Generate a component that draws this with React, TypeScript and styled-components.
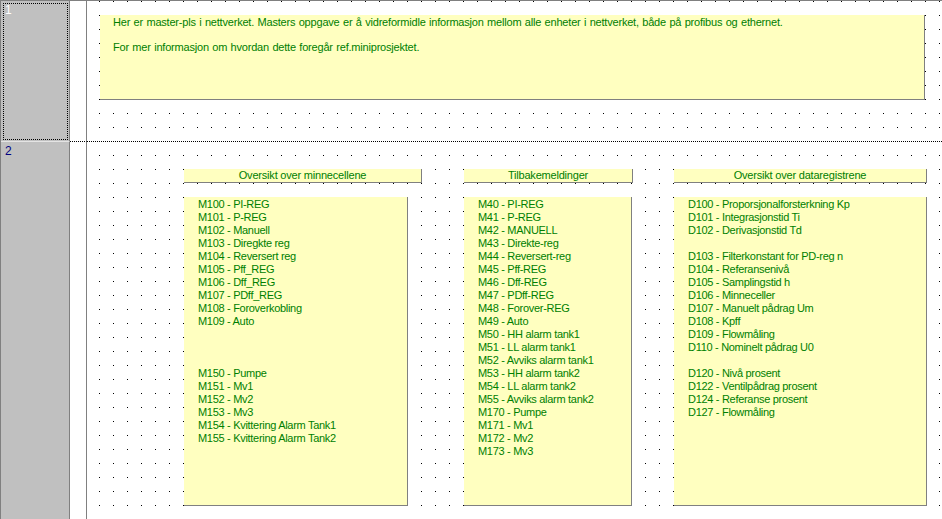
import styled, { createGlobalStyle } from "styled-components";

const GlobalStyle = createGlobalStyle`
    html, body {
        margin: 0;
        padding: 0;
        background: #ffffff;
        overflow: hidden;
    }
    body {
        font-family: "Liberation Sans", Arial, sans-serif;
    }
`;

const Editor = styled.div`
    height: 100vh;
    display: flex;
    flex-direction: column;
    box-sizing: border-box;
    border-top: 1px solid #808080;
    border-left: 1px solid #808080;
`;

const Network = styled.div<{ $height?: number }>`
    display: flex;
    ${(p) => (p.$height ? `height: ${p.$height}px; flex: none;` : "flex: 1;")}
`;

const NetworkLabel = styled.div<{ $active?: boolean }>`
    width: 69px;
    flex: none;
    box-sizing: border-box;
    background: #c0c0c0;
    border-right: 1px solid #808080;
    border-bottom: ${(p) => (p.$active ? "1px solid #e4e4e4" : "none")};
    outline: ${(p) => (p.$active ? "1px dotted #000" : "none")};
    outline-offset: -3px;
    padding: 2px 4px;
    font-size: 12px;
    line-height: 14px;
    color: ${(p) => (p.$active ? "#ffffff" : "#000080")};
`;

const Rail = styled.div<{ $sep?: boolean }>`
    width: 17px;
    flex: none;
    box-sizing: border-box;
    border-right: 1px solid #808080;
    border-bottom: ${(p) => (p.$sep ? "1px dotted #000" : "none")};
`;

const Canvas = styled.div<{ $dotY: number; $sep?: boolean }>`
    flex: 1;
    box-sizing: border-box;
    background-color: #ffffff;
    background-image: conic-gradient(from 270deg at 1px 1px, #000 90deg, transparent 0);
    background-size: 14px 14px;
    background-position: 12px ${(p) => p.$dotY}px;
    border-bottom: ${(p) => (p.$sep ? "1px dotted #000" : "none")};
    font-size: 11px;
    line-height: 13px;
    letter-spacing: -0.3px;
    color: #008000;
`;

const CommentArea = styled.div`
    padding: 14px 0 0 13px;
`;

const CommentBox = styled.div`
    width: 825px;
    height: 85px;
    box-sizing: border-box;
    background: #ffffc0;
    border-right: 1px solid #808080;
    border-bottom: 1px solid #808080;
    padding: 1px 13px;
    white-space: nowrap;
    letter-spacing: -0.2px;
    word-spacing: 0.6px;
`;

const Para = styled.div`
    & + & {
        margin-top: 12px;
    }
`;

const Columns = styled.div`
    display: grid;
    grid-template-columns: 280px 210px 253px;
    padding: 27px 0 0 97px;
`;

const Column = styled.div`
    display: flex;
    flex-direction: column;
    align-items: flex-start;
`;

const Header = styled.div<{ $w: number }>`
    width: ${(p) => p.$w}px;
    height: 14px;
    box-sizing: border-box;
    background: #ffffc0;
    border-right: 1px solid #808080;
    border-bottom: 1px solid #808080;
    text-align: center;
    white-space: nowrap;
    letter-spacing: -0.2px;
`;

const List = styled.div<{ $w: number }>`
    width: ${(p) => p.$w}px;
    height: 309px;
    margin-top: 14px;
    box-sizing: border-box;
    background: #ffffc0;
    border-right: 1px solid #808080;
    border-bottom: 1px solid #808080;
    padding: 1px 14px 0;
    white-space: nowrap;
`;

const Line = styled.div`
    height: 13px;
`;

const memoryCells = [
    "M100 - PI-REG",
    "M101 - P-REG",
    "M102 - Manuell",
    "M103 - Diregkte reg",
    "M104 - Reversert reg",
    "M105 - Pff_REG",
    "M106 - Dff_REG",
    "M107 - PDff_REG",
    "M108 - Foroverkobling",
    "M109 - Auto",
    "",
    "",
    "",
    "M150 - Pumpe",
    "M151 - Mv1",
    "M152 - Mv2",
    "M153 - Mv3",
    "M154 - Kvittering Alarm Tank1",
    "M155 - Kvittering Alarm Tank2",
];

const feedback = [
    "M40 - PI-REG",
    "M41 - P-REG",
    "M42 - MANUELL",
    "M43 - Direkte-reg",
    "M44 - Reversert-reg",
    "M45 - Pff-REG",
    "M46 - Dff-REG",
    "M47 - PDff-REG",
    "M48 - Forover-REG",
    "M49 - Auto",
    "M50 - HH alarm tank1",
    "M51 - LL alarm tank1",
    "M52 - Avviks alarm tank1",
    "M53 - HH alarm tank2",
    "M54 - LL alarm tank2",
    "M55 - Avviks alarm tank2",
    "M170 - Pumpe",
    "M171 - Mv1",
    "M172 - Mv2",
    "M173 - Mv3",
];

const dataRegisters = [
    "D100 - Proporsjonalforsterkning Kp",
    "D101 - Integrasjonstid Ti",
    "D102 - Derivasjonstid Td",
    "",
    "D103 - Filterkonstant for PD-reg n",
    "D104 - Referansenivå",
    "D105 - Samplingstid h",
    "D106 - Minneceller",
    "D107 - Manuelt pådrag Um",
    "D108 - Kpff",
    "D109 - Flowmåling",
    "D110 - Nominelt pådrag U0",
    "",
    "D120 - Nivå prosent",
    "D122 - Ventilpådrag prosent",
    "D124 - Referanse prosent",
    "D127 - Flowmåling",
];

const sections = [
    { title: "Oversikt over minnecellene", headerW: 238, listW: 224, lines: memoryCells },
    { title: "Tilbakemeldinger", headerW: 169, listW: 168, lines: feedback },
    { title: "Oversikt over dataregistrene", headerW: 253, listW: 253, lines: dataRegisters },
];

export default function App() {
    return (
        <>
            <GlobalStyle />
            <Editor>
                <Network $height={141}>
                    <NetworkLabel $active>1</NetworkLabel>
                    <Rail $sep />
                    <Canvas $dotY={14} $sep>
                        <CommentArea>
                            <CommentBox>
                                <Para>
                                    Her er master-pls i nettverket. Masters oppgave er å vidreformidle
                                    informasjon mellom alle enheter i nettverket, både på profibus og
                                    ethernet.
                                </Para>
                                <Para>For mer informasjon om hvordan dette foregår ref.miniprosjektet.</Para>
                            </CommentBox>
                        </CommentArea>
                    </Canvas>
                </Network>
                <Network>
                    <NetworkLabel>2</NetworkLabel>
                    <Rail />
                    <Canvas $dotY={13}>
                        <Columns>
                            {sections.map((s) => (
                                <Column key={s.title}>
                                    <Header $w={s.headerW}>{s.title}</Header>
                                    <List $w={s.listW}>
                                        {s.lines.map((l, i) => (
                                            <Line key={i}>{l}</Line>
                                        ))}
                                    </List>
                                </Column>
                            ))}
                        </Columns>
                    </Canvas>
                </Network>
            </Editor>
        </>
    );
}
